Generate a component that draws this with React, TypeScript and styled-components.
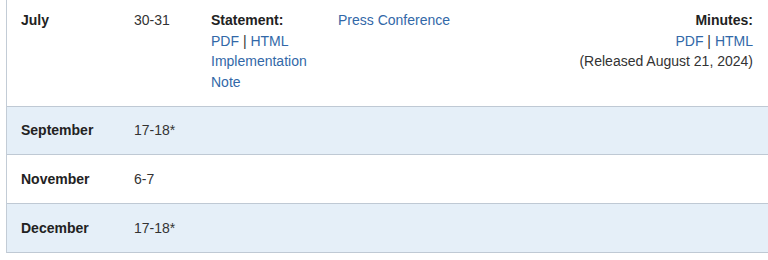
import React from "react";
import styled, { createGlobalStyle } from "styled-components";

const Global = createGlobalStyle`
  html, body { margin: 0; padding: 0; background: #fff; }
  body { font-family: "Liberation Sans", Arial, sans-serif; font-size: 14px; color: #333; }
`;

const Panel = styled.div`
  margin-left: 6px;
  border-left: 1px solid #c3ccd6;
  margin-top: -3.5px;
`;

const Row = styled.div<{ $striped?: boolean }>`
  display: grid;
  grid-template-columns: 113px 77px 127px 1fr auto;
  align-items: start;
  background: ${(p) => (p.$striped ? "#e5eff8" : "#fff")};
  border-bottom: 1px solid #bfc9d4;
  line-height: 20.6px;
`;

const Cell = styled.div<{ $right?: boolean }>`
  padding: 13.5px ${(p) => (p.$right ? "15px" : "0")} 13.5px 14px;
  text-align: ${(p) => (p.$right ? "right" : "left")};
`;

const Month = styled(Cell)`
  font-weight: bold;
  color: #222;
`;

const Label = styled.div`
  font-weight: bold;
  color: #222;
`;

const Link = styled.a`
  color: #3268a8;
  text-decoration: none;
`;

const Sep = styled.span`
  color: #333;
`;

const meetings = [
  { month: "September", dates: "17-18*", striped: true },
  { month: "November", dates: "6-7", striped: false },
  { month: "December", dates: "17-18*", striped: true },
];

export default function App() {
  return (
    <>
      <Global />
      <Panel>
        <Row>
          <Month>July</Month>
          <Cell>30-31</Cell>
          <Cell>
            <Label>Statement:</Label>
            <div>
              <Link href="#">PDF</Link> <Sep>|</Sep> <Link href="#">HTML</Link>
            </div>
            <div>
              <Link href="#">Implementation Note</Link>
            </div>
          </Cell>
          <Cell>
            <Link href="#">Press Conference</Link>
          </Cell>
          <Cell $right>
            <Label>Minutes:</Label>
            <div>
              <Link href="#">PDF</Link> <Sep>|</Sep> <Link href="#">HTML</Link>
            </div>
            <div>(Released August 21, 2024)</div>
          </Cell>
        </Row>
        {meetings.map((m) => (
          <Row key={m.month} $striped={m.striped}>
            <Month>{m.month}</Month>
            <Cell>{m.dates}</Cell>
            <Cell />
            <Cell />
            <Cell $right />
          </Row>
        ))}
      </Panel>
    </>
  );
}
